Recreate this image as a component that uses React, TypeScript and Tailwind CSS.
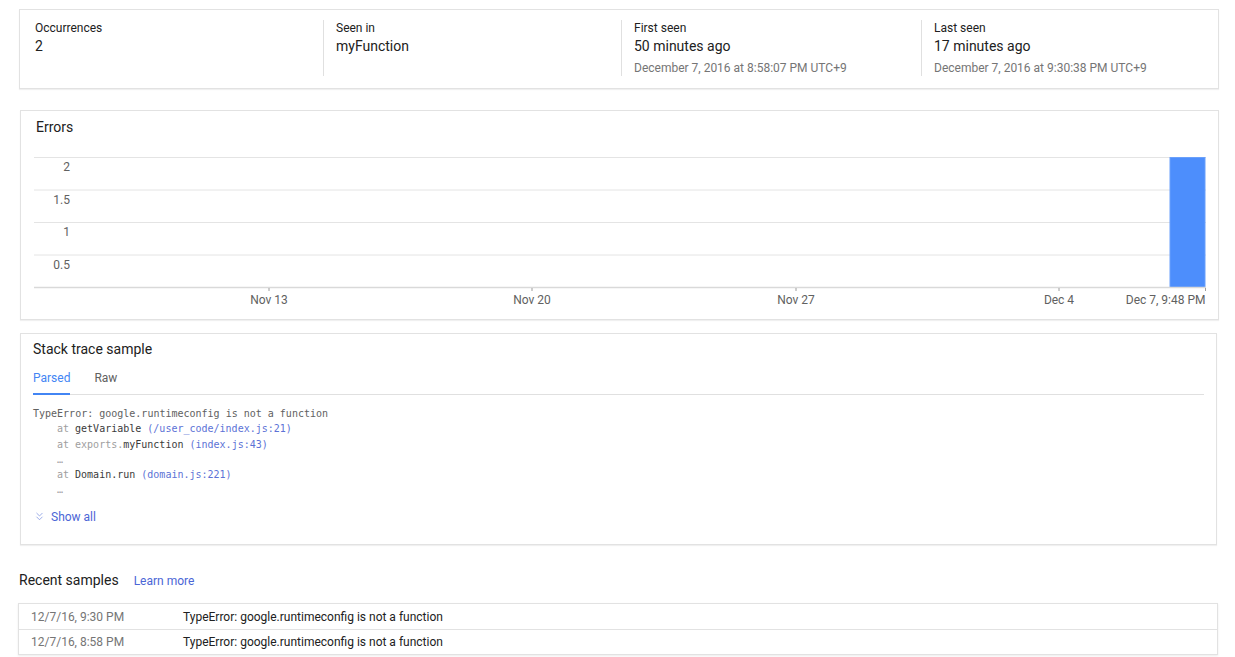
import React from "react";
import { ChevronsDown } from "lucide-react";

const font = { fontFamily: "Roboto, 'Noto Sans', Arial, sans-serif" };

function Stat({
  label,
  value,
  sub,
  className,
}: {
  label: string;
  value: string;
  sub?: string;
  className: string;
}) {
  return (
    <div className={className}>
      <div className="text-[12px] leading-[16px] text-[#212121]">{label}</div>
      <div className="text-[14px] leading-[20px] text-[#212121]">{value}</div>
      {sub && (
        <div className="mt-[4px] text-[12px] leading-[16px] text-[#757575]">{sub}</div>
      )}
    </div>
  );
}

function Chart() {
  const grid = [7.5, 40, 72.5, 105];
  const labels = ["2", "1.5", "1", "0.5"];
  const ticks = [
    { x: 235, t: "Nov 13", a: "middle" },
    { x: 498, t: "Nov 20", a: "middle" },
    { x: 762, t: "Nov 27", a: "middle" },
    { x: 1025, t: "Dec 4", a: "middle" },
    { x: 1171.5, t: "Dec 7, 9:48 PM", a: "end" },
  ];
  return (
    <svg width="1174" height="160" className="block" style={{ fontFamily: "Roboto, Arial, sans-serif" }}>
      {grid.map((y, i) => (
        <g key={y}>
          <line x1="0" x2="1172" y1={y} y2={y} stroke="#e4e4e4" strokeWidth="1" />
          <text x="36" y={y + 13.5} textAnchor="end" fontSize="12" fill="#616161">
            {labels[i]}
          </text>
        </g>
      ))}
      <rect x="1136" y="7.5" width="35" height="130" fill="#4d8efc" stroke="#6aa0fb" strokeWidth="1" />
      <line x1="0" x2="1172" y1="137.5" y2="137.5" stroke="#d9d9d9" strokeWidth="1.5" />
      {ticks.map((k) => (
        <g key={k.t}>
          <line x1={k.x} x2={k.x} y1="138" y2="141" stroke="#9e9e9e" strokeWidth="1" />
          <text
            x={k.x}
            y="154"
            textAnchor={k.a as "middle" | "end"}
            fontSize="12"
            fill="#616161"
          >
            {k.t}
          </text>
        </g>
      ))}
    </svg>
  );
}

const mono = { fontFamily: "'DejaVu Sans Mono', 'Liberation Mono', monospace" };

export default function App() {
  return (
    <div className="w-[1235px] h-[657px] overflow-hidden bg-white pl-[19px] pt-[9px]" style={font}>
      {/* Top stats card */}
      <div className="w-[1200px] h-[80px] border border-[#e2e2e2] shadow-[0_1px_1px_rgba(0,0,0,0.06)] pl-[15px] pt-[10px] flex">
        <Stat className="w-[288px] h-[56px]" label="Occurrences" value="2" />
        <Stat
          className="w-[298px] h-[56px] border-l border-[#e0e0e0] pl-[12px]"
          label="Seen in"
          value="myFunction"
        />
        <Stat
          className="w-[300px] h-[56px] border-l border-[#e0e0e0] pl-[12px]"
          label="First seen"
          value="50 minutes ago"
          sub="December 7, 2016 at 8:58:07 PM UTC+9"
        />
        <Stat
          className="flex-1 h-[56px] border-l border-[#e0e0e0] pl-[12px]"
          label="Last seen"
          value="17 minutes ago"
          sub="December 7, 2016 at 9:30:38 PM UTC+9"
        />
      </div>

      {/* Errors chart card */}
      <div className="mt-[21px] ml-[1px] w-[1199px] h-[210px] border border-[#e2e2e2] shadow-[0_1px_1px_rgba(0,0,0,0.06)] pl-[13px] pt-[6px]">
        <div className="pl-[2px] text-[14px] leading-[20px] text-[#212121]">Errors</div>
        <div className="mt-[13px]">
          <Chart />
        </div>
      </div>

      {/* Stack trace card */}
      <div className="mt-[13px] ml-[1px] w-[1197px] h-[212px] border border-[#e2e2e2] shadow-[0_1px_1px_rgba(0,0,0,0.06)] px-[12px] pt-[5px]">
        <div className="text-[14px] leading-[20px] text-[#212121]">Stack trace sample</div>
        <div className="mt-[11px] flex gap-[24px] border-b border-[#e0e0e0]">
          <div className="text-[12px] leading-[16px] pb-[7px] text-[#4285f4] border-b-2 border-[#4285f4] -mb-px">
            Parsed
          </div>
          <div className="text-[12px] leading-[16px] pb-[7px] text-[#616161]">Raw</div>
        </div>
        <div className="mt-[11px] text-[10px] leading-[15.3px] whitespace-pre" style={mono}>
          <div className="text-[#616161]">TypeError: google.runtimeconfig is not a function</div>
          <div className="pl-[24px]">
            <span className="text-[#9e9e9e]">at </span>
            <span className="text-[#3a3a3a]">getVariable</span>{" "}
            <span className="text-[#5c72d6]">(/user_code/index.js:21)</span>
          </div>
          <div className="pl-[24px]">
            <span className="text-[#9e9e9e]">at exports.</span>
            <span className="text-[#3a3a3a]">myFunction</span>{" "}
            <span className="text-[#5c72d6]">(index.js:43)</span>
          </div>
          <div className="pl-[24px] text-[#9e9e9e]">…</div>
          <div className="pl-[24px]">
            <span className="text-[#9e9e9e]">at </span>
            <span className="text-[#3a3a3a]">Domain.run</span>{" "}
            <span className="text-[#5c72d6]">(domain.js:221)</span>
          </div>
          <div className="pl-[24px] text-[#9e9e9e]">…</div>
        </div>
        <div className="mt-[11px] flex items-center gap-[5px] text-[12px] leading-[16px] text-[#4b66d6]">
          <ChevronsDown size={13} strokeWidth={1.4} className="text-[#7d93e0]" />
          <span>Show all</span>
        </div>
      </div>

      {/* Recent samples */}
      <div className="mt-[25px] flex items-baseline gap-[15px]">
        <span className="text-[14px] leading-[20px] text-[#212121]">Recent samples</span>
        <span className="text-[12px] leading-[16px] text-[#4b66d6]">Learn more</span>
      </div>
      <div className="mt-[13px] -ml-px w-[1200px] border border-[#e2e2e2] shadow-[0_1px_2px_rgba(0,0,0,0.08)]">
        {[
          ["12/7/16, 9:30 PM", "TypeError: google.runtimeconfig is not a function"],
          ["12/7/16, 8:58 PM", "TypeError: google.runtimeconfig is not a function"],
        ].map(([t, m], i) => (
          <div
            key={t}
            className={`flex h-[25px] items-center text-[12px] ${i > 0 ? "border-t border-[#e2e2e2]" : ""}`}
          >
            <span className="w-[164px] pl-[12px] text-[#757575]">{t}</span>
            <span className="text-[#212121]">{m}</span>
          </div>
        ))}
      </div>
    </div>
  );
}
